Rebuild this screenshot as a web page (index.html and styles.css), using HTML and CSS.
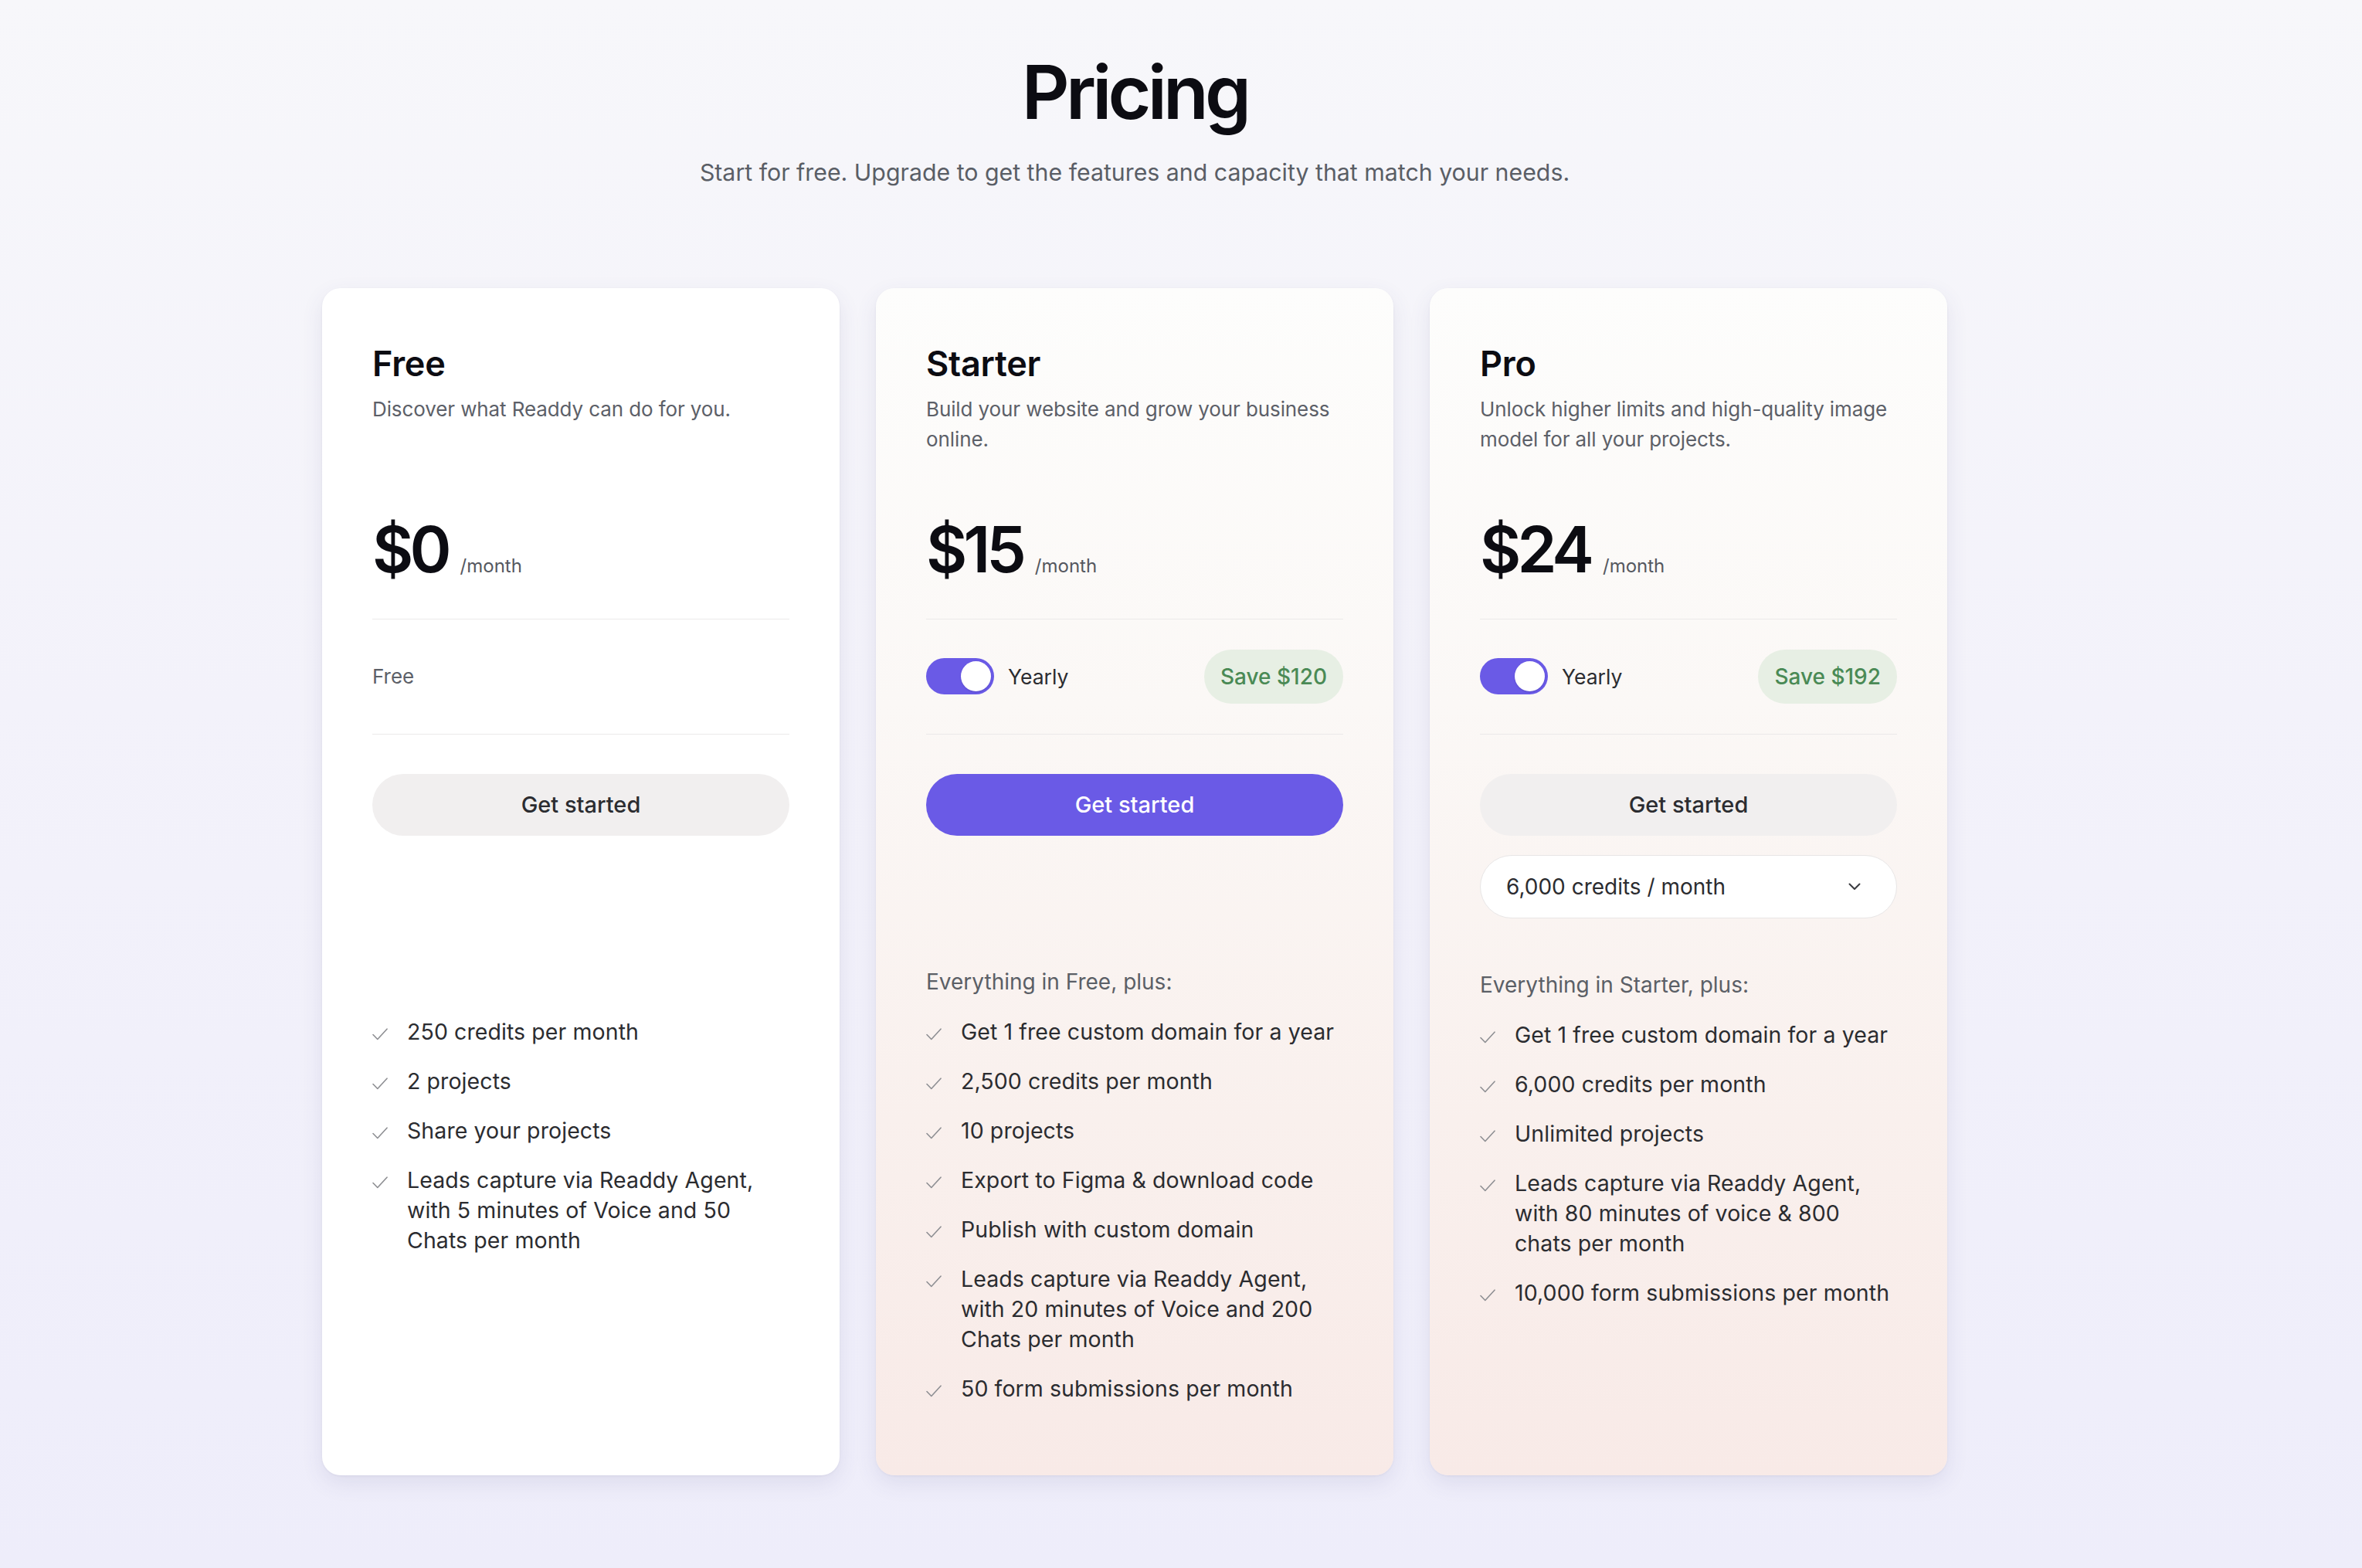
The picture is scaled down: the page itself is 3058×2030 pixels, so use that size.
FILE: index.html
```html
<!DOCTYPE html>
<html lang="en">
<head>
<meta charset="utf-8">
<title>Pricing</title>
<link rel="stylesheet" href="styles.css">
</head>
<body>
<main class="page">
  <header class="hero">
    <h1 class="hero-title">Pricing</h1>
    <p class="hero-sub">Start for free. Upgrade to get the features and capacity that match your needs.</p>
  </header>

  <section class="plans">
    <!-- Free -->
    <article class="card card-free">
      <h2 class="plan-name">Free</h2>
      <p class="plan-desc">Discover what Readdy can do for you.</p>
      <div class="price-row"><span class="price">$0</span><span class="per">/month</span></div>
      <div class="billing">
        <span class="billing-free">Free</span>
      </div>
      <button class="cta cta-light">Get started</button>
      <div class="select-slot"></div>
      <ul class="features">
        <li class="features-head is-hidden">Everything in Free, plus:</li>
        <li class="feature"><svg class="check" viewBox="0 0 20 16"><path d="M1 8.5 L6.8 14.5 L19 1.2"/></svg><span>250 credits per month</span></li>
        <li class="feature"><svg class="check" viewBox="0 0 20 16"><path d="M1 8.5 L6.8 14.5 L19 1.2"/></svg><span>2 projects</span></li>
        <li class="feature"><svg class="check" viewBox="0 0 20 16"><path d="M1 8.5 L6.8 14.5 L19 1.2"/></svg><span>Share your projects</span></li>
        <li class="feature"><svg class="check" viewBox="0 0 20 16"><path d="M1 8.5 L6.8 14.5 L19 1.2"/></svg><span>Leads capture via Readdy Agent, with 5 minutes of Voice and 50 Chats per month</span></li>
      </ul>
    </article>

    <!-- Starter -->
    <article class="card card-tint">
      <h2 class="plan-name">Starter</h2>
      <p class="plan-desc">Build your website and grow your business online.</p>
      <div class="price-row"><span class="price">$15</span><span class="per">/month</span></div>
      <div class="billing">
        <div class="toggle-wrap">
          <span class="toggle"><span class="knob"></span></span>
          <span class="toggle-label">Yearly</span>
        </div>
        <span class="save">Save $120</span>
      </div>
      <button class="cta cta-primary">Get started</button>
      <div class="select-slot"></div>
      <ul class="features">
        <li class="features-head">Everything in Free, plus:</li>
        <li class="feature"><svg class="check" viewBox="0 0 20 16"><path d="M1 8.5 L6.8 14.5 L19 1.2"/></svg><span>Get 1 free custom domain for a year</span></li>
        <li class="feature"><svg class="check" viewBox="0 0 20 16"><path d="M1 8.5 L6.8 14.5 L19 1.2"/></svg><span>2,500 credits per month</span></li>
        <li class="feature"><svg class="check" viewBox="0 0 20 16"><path d="M1 8.5 L6.8 14.5 L19 1.2"/></svg><span>10 projects</span></li>
        <li class="feature"><svg class="check" viewBox="0 0 20 16"><path d="M1 8.5 L6.8 14.5 L19 1.2"/></svg><span>Export to Figma &amp; download code</span></li>
        <li class="feature"><svg class="check" viewBox="0 0 20 16"><path d="M1 8.5 L6.8 14.5 L19 1.2"/></svg><span>Publish with custom domain</span></li>
        <li class="feature"><svg class="check" viewBox="0 0 20 16"><path d="M1 8.5 L6.8 14.5 L19 1.2"/></svg><span>Leads capture via Readdy Agent, with 20 minutes of Voice and 200 Chats per month</span></li>
        <li class="feature"><svg class="check" viewBox="0 0 20 16"><path d="M1 8.5 L6.8 14.5 L19 1.2"/></svg><span>50 form submissions per month</span></li>
      </ul>
    </article>

    <!-- Pro -->
    <article class="card card-tint">
      <h2 class="plan-name">Pro</h2>
      <p class="plan-desc">Unlock higher limits and high-quality image model for all your projects.</p>
      <div class="price-row"><span class="price">$24</span><span class="per">/month</span></div>
      <div class="billing">
        <div class="toggle-wrap">
          <span class="toggle"><span class="knob"></span></span>
          <span class="toggle-label">Yearly</span>
        </div>
        <span class="save">Save $192</span>
      </div>
      <button class="cta cta-light">Get started</button>
      <div class="select">
        <span>6,000 credits / month</span>
        <svg class="chev" viewBox="0 0 16 10"><path d="M1.5 1.5 L8 8 L14.5 1.5"/></svg>
      </div>
      <ul class="features features-pro">
        <li class="features-head">Everything in Starter, plus:</li>
        <li class="feature"><svg class="check" viewBox="0 0 20 16"><path d="M1 8.5 L6.8 14.5 L19 1.2"/></svg><span>Get 1 free custom domain for a year</span></li>
        <li class="feature"><svg class="check" viewBox="0 0 20 16"><path d="M1 8.5 L6.8 14.5 L19 1.2"/></svg><span>6,000 credits per month</span></li>
        <li class="feature"><svg class="check" viewBox="0 0 20 16"><path d="M1 8.5 L6.8 14.5 L19 1.2"/></svg><span>Unlimited projects</span></li>
        <li class="feature"><svg class="check" viewBox="0 0 20 16"><path d="M1 8.5 L6.8 14.5 L19 1.2"/></svg><span>Leads capture via Readdy Agent, with 80 minutes of voice &amp; 800 chats per month</span></li>
        <li class="feature"><svg class="check" viewBox="0 0 20 16"><path d="M1 8.5 L6.8 14.5 L19 1.2"/></svg><span>10,000 form submissions per month</span></li>
      </ul>
    </article>
  </section>
</main>
</body>
</html>
```

FILE: styles.css
```css
* { box-sizing: border-box; }

html, body {
  margin: 0;
  padding: 0;
}

body {
  min-height: 2030px;
  font-family: "Inter", "Noto Sans", "Liberation Sans", sans-serif;
  color: #1d1d22;
  background: linear-gradient(180deg, #f7f7fa 0%, #f3f2fa 45%, #eeedfa 100%);
}

.page {
  width: 2938px;
  display: flex;
  flex-direction: column;
  align-items: center;
  padding-top: 67px;
  padding-bottom: 120px;
}

.hero {
  display: flex;
  flex-direction: column;
  align-items: center;
}

.hero-title {
  margin: 0;
  font-size: 96px;
  line-height: 105.6px;
  font-weight: 600;
  letter-spacing: -0.05em;
  color: #0c0c12;
}

.hero-sub {
  margin: 30px 0 0;
  font-size: 30.3px;
  line-height: 40px;
  font-weight: 400;
  color: #5a5e66;
}

.plans {
  margin-top: 130px;
  display: grid;
  grid-template-columns: repeat(3, 670px);
  column-gap: 47px;
  align-items: stretch;
}

.card {
  border-radius: 24px;
  padding: 70px 65px 93px;
  display: flex;
  flex-direction: column;
  box-shadow: 0 10px 28px rgba(70, 70, 130, 0.10), 0 1px 3px rgba(40, 40, 80, 0.06);
}

.card-free {
  background: #ffffff;
}

.card-tint {
  background: linear-gradient(180deg, #fdfdfc 0%, #fbf8f6 35%, #f9f0ed 70%, #f8eae7 100%);
}

.plan-name {
  margin: 0;
  font-size: 45px;
  line-height: 56px;
  font-weight: 600;
  letter-spacing: -0.005em;
  color: #0c0c12;
}

.plan-desc {
  margin: 11px 0 0;
  min-height: 78px;
  font-size: 26px;
  line-height: 39px;
  letter-spacing: -0.004em;
  color: #5c6068;
}

.price-row {
  margin-top: 83px;
  padding-bottom: 48px;
  display: flex;
  align-items: baseline;
  gap: 16px;
  border-bottom: 1.5px solid #ebe9e9;
}

.price {
  font-size: 82px;
  line-height: 82px;
  font-weight: 600;
  letter-spacing: -0.06em;
  color: #0c0c12;
}

.per {
  font-size: 24px;
  color: #55585f;
}

.billing {
  height: 149px;
  display: flex;
  align-items: center;
  justify-content: space-between;
  border-bottom: 1.5px solid #ebe9e9;
}

.billing-free {
  font-size: 26px;
  color: #5c6068;
}

.toggle-wrap {
  display: flex;
  align-items: center;
  gap: 18px;
}

.toggle {
  width: 88px;
  height: 47px;
  border-radius: 999px;
  background: #6a5ae6;
  display: flex;
  align-items: center;
  justify-content: flex-end;
  padding: 0 4px;
}

.knob {
  width: 39px;
  height: 39px;
  border-radius: 50%;
  background: #ffffff;
  box-shadow: 0 1px 2px rgba(40, 30, 120, 0.25);
}

.toggle-label {
  font-size: 26.5px;
  color: #2b2c30;
}

.save {
  height: 70px;
  padding: 0 21px;
  border-radius: 999px;
  background: #e7efe4;
  color: #4a8a55;
  font-size: 28px;
  font-weight: 500;
  display: flex;
  align-items: center;
}

.cta {
  margin-top: 51px;
  height: 80px;
  width: 100%;
  border: 0;
  border-radius: 999px;
  font-family: inherit;
  font-size: 29px;
  font-weight: 500;
  cursor: pointer;
}

.cta-light {
  background: #f1efef;
  color: #2b2c30;
}

.cta-primary {
  background: #6a5ae6;
  color: #ffffff;
}

.select-slot {
  margin-top: 25px;
  height: 78px;
}

.select {
  margin-top: 25px;
  height: 82px;
  border: 1.5px solid #e8e6e6;
  border-radius: 999px;
  background: #ffffff;
  padding: 0 46px 0 33px;
  display: flex;
  align-items: center;
  justify-content: space-between;
  font-size: 28px;
  color: #2b2c30;
}

.chev {
  width: 16px;
  height: 10px;
  fill: none;
  stroke: #3a3b40;
  stroke-width: 2;
  stroke-linecap: round;
  stroke-linejoin: round;
}

.features {
  list-style: none;
  margin: 67px 0 0;
  padding: 0;
  display: flex;
  flex-direction: column;
  gap: 25px;
}

.features-head {
  font-size: 28px;
  line-height: 39px;
  color: #5b5f66;
}

.is-hidden {
  visibility: hidden;
}

.feature {
  display: flex;
  align-items: flex-start;
  gap: 25px;
  font-size: 28.5px;
  line-height: 39px;
  letter-spacing: 0.003em;
  color: #2b2c30;
}

.check {
  flex: none;
  width: 20px;
  height: 16px;
  margin-top: 15px;
  fill: none;
  stroke: #8e8f93;
  stroke-width: 1.6;
  stroke-linecap: round;
  stroke-linejoin: round;
}
```
